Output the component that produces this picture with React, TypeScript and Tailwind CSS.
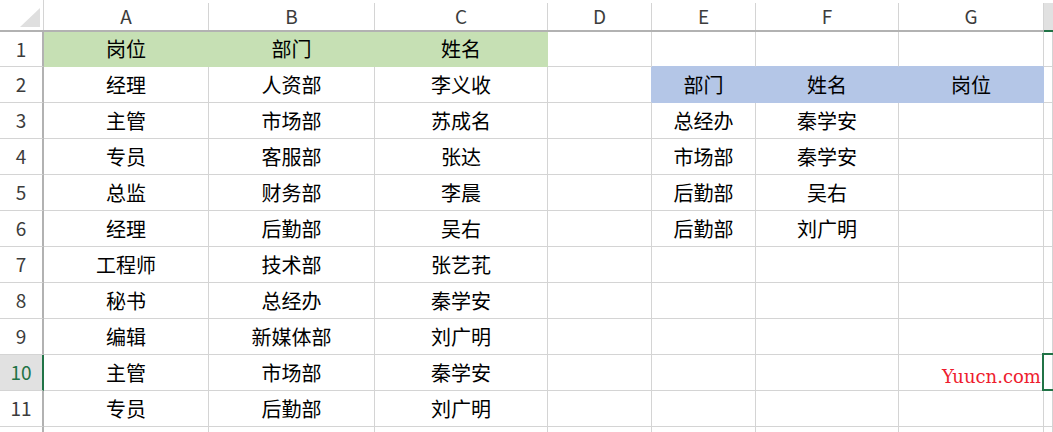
import React from 'react';

const GREEN = 'bg-[#c6e0b4]';
const BLUE = 'bg-[#b4c6e7]';

const colW = ['w-[165px]', 'w-[166px]', 'w-[173px]', 'w-[104px]', 'w-[104px]', 'w-[143px]', 'w-[145px]', 'flex-1'];
const letters = ['A', 'B', 'C', 'D', 'E', 'F', 'G', ''];

const A = ['岗位', '经理', '主管', '专员', '总监', '经理', '工程师', '秘书', '编辑', '主管', '专员', ''];
const B = ['部门', '人资部', '市场部', '客服部', '财务部', '后勤部', '技术部', '总经办', '新媒体部', '市场部', '后勤部', ''];
const C = ['姓名', '李义收', '苏成名', '张达', '李晨', '吴右', '张艺芤', '秦学安', '刘广明', '秦学安', '刘广明', ''];
const E = ['', '部门', '总经办', '市场部', '后勤部', '后勤部'];
const F = ['', '姓名', '秦学安', '秦学安', '吴右', '刘广明'];
const G = ['', '岗位'];

function cellText(r: number, c: number) {
  const i = r - 1;
  if (c === 0) return A[i] ?? '';
  if (c === 1) return B[i] ?? '';
  if (c === 2) return C[i] ?? '';
  if (c === 4) return E[i] ?? '';
  if (c === 5) return F[i] ?? '';
  if (c === 6) return G[i] ?? '';
  return '';
}

function cellClass(r: number, c: number) {
  const green = r === 1 && c <= 2;
  const blue = r === 2 && c >= 4 && c <= 6;
  let cls = 'border-r border-b flex items-center justify-center ';
  if (green) cls += GREEN + ' border-r-[#c6e0b4] border-b-[#c6e0b4]';
  else if (blue) cls += BLUE + ' border-r-[#b4c6e7] border-b-[#b4c6e7]';
  else {
    cls += r === 2 && c === 3 ? 'border-r-[#b4c6e7]' : 'border-r-[#d4d4d4]';
    cls += r === 1 && c >= 4 && c <= 6 ? ' border-b-[#b4c6e7]' : ' border-b-[#d4d4d4]';
  }
  return cls;
}

export default function App() {
  const rows = Array.from({ length: 12 }, (_, i) => i + 1);

  return (
    <div className="relative h-[432px] w-[1053px] overflow-hidden bg-white text-black font-['Noto_Sans_CJK_SC','Noto_Sans',sans-serif]">
      {/* column headers */}
      <div className="flex h-[32px] border-b-2 border-[#b2b2b2]">
        <div className="relative w-[44px] shrink-0 border-r border-[#d4d4d4]">
          <svg className="absolute left-[20px] top-[8px]" width="20" height="19" viewBox="0 0 20 19">
            <polygon points="20,0 20,19 0,19" fill="#dfdfdf" />
          </svg>
        </div>
        {letters.map((l, c) => (
          <div
            key={c}
            className={`${colW[c]} shrink-0 mt-[3px] flex items-center justify-center text-[19px] text-[#3c3c3c] ${
              c === 7 ? 'bg-[#e1e1e1] border-b-2 border-b-[#217346] -mb-[2px]' : 'border-r border-[#d4d4d4]'
            }`}
          >
            {l}
          </div>
        ))}
      </div>

      {rows.map((r) => (
        <div key={r} className={`flex ${r === 1 ? 'h-[35px]' : 'h-[36px]'}`}>
          <div
            className={`w-[44px] shrink-0 border-r-2 border-b border-b-[#d4d4d4] flex items-center justify-center text-[19px] ${
              r === 10 ? 'bg-[#e1e1e1] border-r-[#217346] text-[#217346]' : 'border-r-[#b2b2b2] text-[#3c3c3c]'
            }`}
          >
            {r < 12 ? r : ''}
          </div>
          {colW.map((w, c) => (
            <div key={c} className={`${w} shrink-0 text-[20px] ${cellClass(r, c)}`}>
              {cellText(r, c)}
            </div>
          ))}
        </div>
      ))}

      {/* watermark */}
      <div className="absolute left-[942px] top-[363px] text-[18px] text-[#ee1c2e] font-['DejaVu_Serif',serif]">
        Yuucn.com
      </div>

      {/* active cell */}
      <div className="absolute left-[1042px] top-[353px] h-[38px] w-[20px] border-2 border-[#217346]" />
    </div>
  );
}
